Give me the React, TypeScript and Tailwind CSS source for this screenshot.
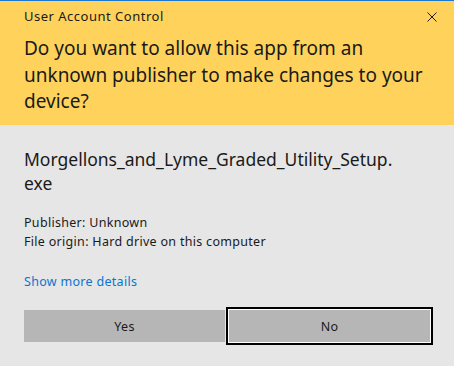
import React from 'react';

const font = { fontFamily: '"Segoe UI", "Noto Sans", sans-serif' };

export default function App() {
  return (
    <div
      className="w-[454px] h-[366px] bg-[#e6e6e6] border-t border-[#1b78cf] text-black overflow-hidden"
      style={font}
    >
      {/* Yellow header */}
      <div className="relative h-[124px] bg-[#ffd35b] px-[24px] pt-[7px] whitespace-nowrap">
        <div className="text-[13px] tracking-[0.5px] leading-[16px] text-[#1a1a1a]">User Account Control</div>
        <button type="button" aria-label="Close" className="absolute right-[17px] top-[11px] w-[10px] h-[10px]">
          <svg viewBox="0 0 10 10" className="w-[10px] h-[10px]" fill="none" stroke="#1a1a1a" strokeWidth="1">
            <path d="M0.5 0.5 L9.5 9.5 M9.5 0.5 L0.5 9.5" />
          </svg>
        </button>
        <h1 className="mt-[11px] text-[19px] leading-[26.6px] text-[#1a1a1a]">
          Do you want to allow this app from an
          <br />
          unknown publisher to make changes to your
          <br />
          device?
        </h1>
      </div>

      {/* Body */}
      <div className="px-[24px] pt-[22px] whitespace-nowrap">
        <div className="text-[17.5px] leading-[24px] text-[#1a1a1a]">
          Morgellons_and_Lyme_Graded_Utility_Setup.
          <br />
          exe
        </div>
        <div className="mt-[18px] text-[12.5px] tracking-[0.3px] leading-[19px] text-[#1a1a1a]">
          <div>Publisher: Unknown</div>
          <div>File origin: Hard drive on this computer</div>
        </div>
        <div className="mt-[23px] text-[12.5px] tracking-[0.3px] leading-[16px] text-[#0a74d0]">Show more details</div>
      </div>

      {/* Buttons */}
      <div className="flex items-center pl-[24px] mt-[17px]">
        <button
          type="button"
          className="w-[201px] h-[32px] pt-[2px] bg-[#b6b6b6] text-[12.5px] tracking-[0.3px] text-[#1a1a1a]"
        >
          Yes
        </button>
        <div className="ml-[1px] w-[207px] h-[38px] border-2 border-black">
          <button
            type="button"
            className="w-full h-full pt-[2px] bg-[#b6b6b6] border border-white text-[12.5px] tracking-[0.3px] text-[#1a1a1a]"
          >
            No
          </button>
        </div>
      </div>
    </div>
  );
}
